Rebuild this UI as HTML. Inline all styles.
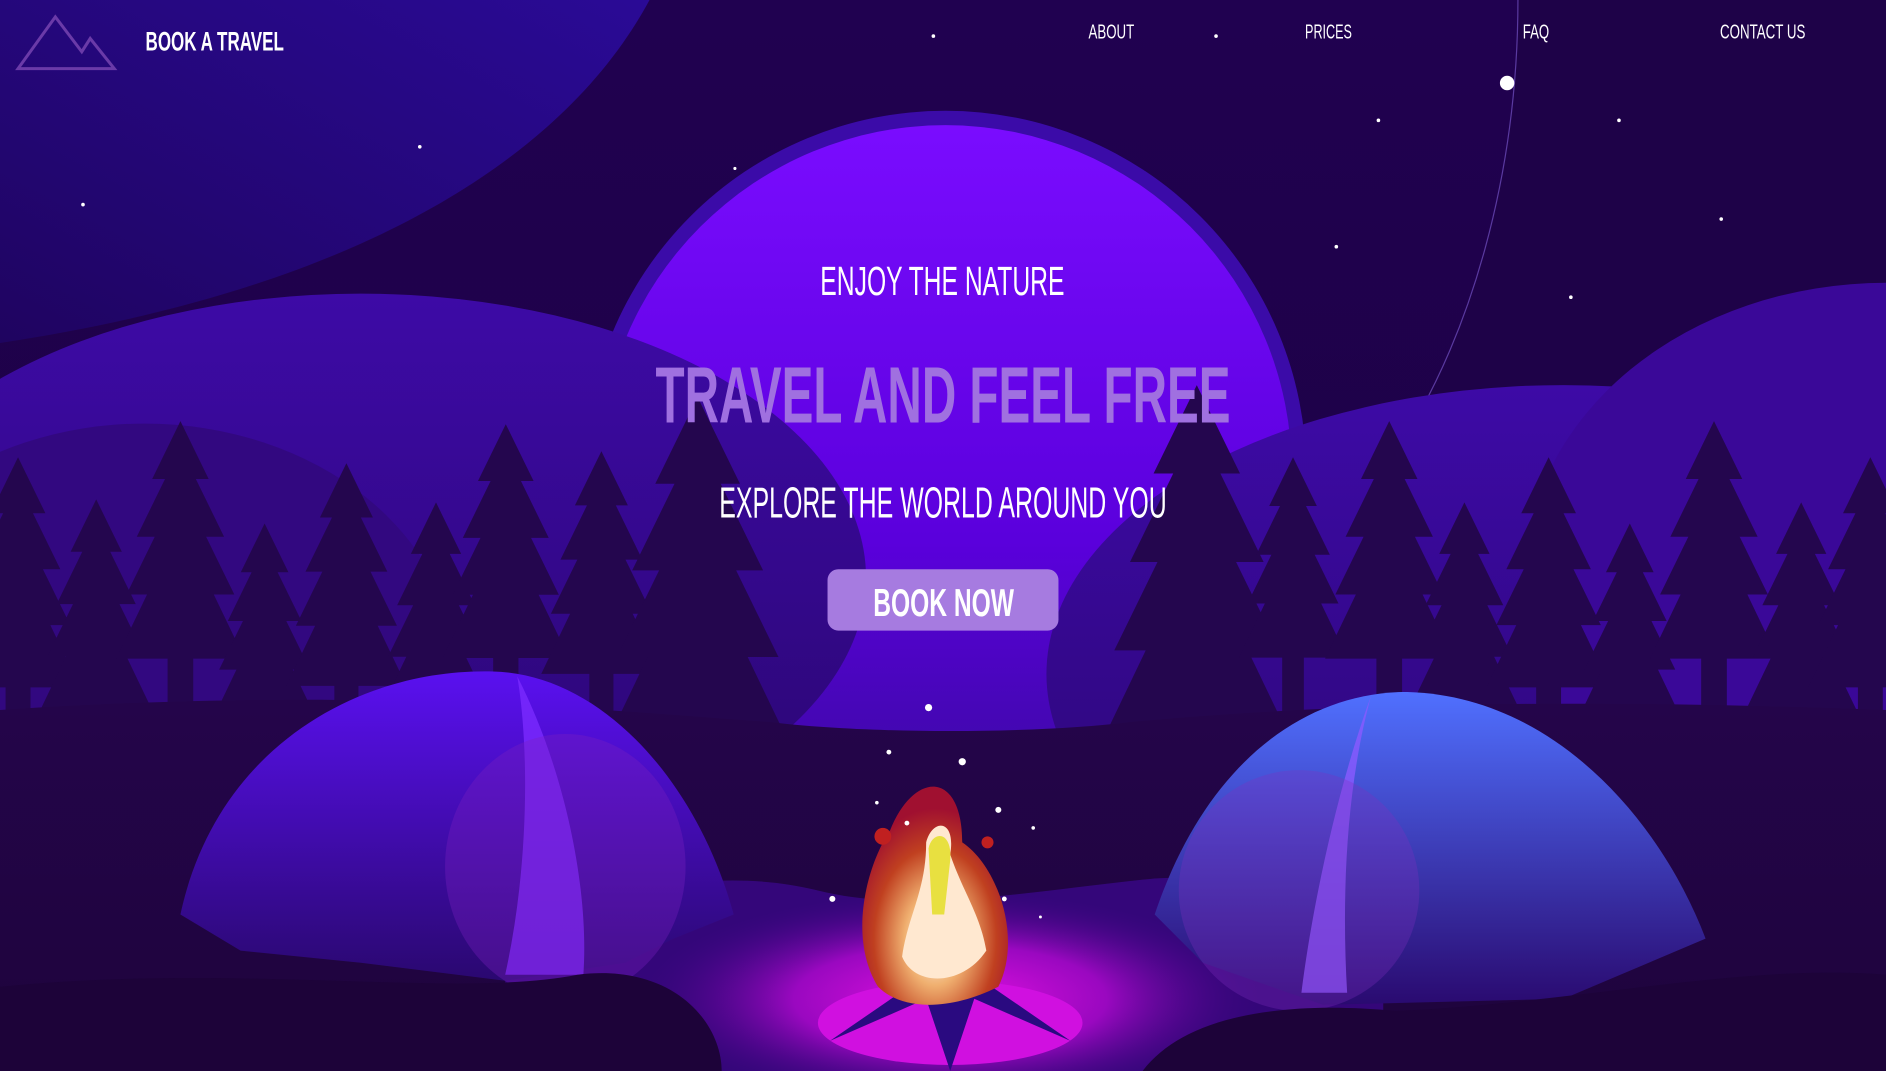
<!DOCTYPE html>
<html><head><meta charset="utf-8"><style>
html,body{margin:0;padding:0;background:#1e0245;overflow:hidden}
svg{display:block}
text{font-family:"Liberation Sans",sans-serif}
</style></head><body>
<svg width="1886" height="1071" viewBox="0 0 1568 890" preserveAspectRatio="none" xmlns="http://www.w3.org/2000/svg">
<defs>
<linearGradient id="bg" x1="0" y1="0" x2="0" y2="1"><stop offset="0" stop-color="#200150"/><stop offset="1" stop-color="#1c0240"/></linearGradient>
<linearGradient id="tl" x1="0" y1="1" x2="1" y2="0"><stop offset="0" stop-color="#1f0460"/><stop offset="1" stop-color="#2a0a96"/></linearGradient>
<linearGradient id="moon" x1="0" y1="0" x2="0" y2="1"><stop offset="0" stop-color="#7a0cff"/><stop offset="0.6" stop-color="#5a00dc"/><stop offset="1" stop-color="#3a0aa0"/></linearGradient>
<linearGradient id="hill" x1="0" y1="0" x2="0" y2="1"><stop offset="0" stop-color="#3d0aa6"/><stop offset="1" stop-color="#2a0670"/></linearGradient>
<linearGradient id="tentL" x1="0" y1="0" x2="0" y2="1"><stop offset="0" stop-color="#5a10f0"/><stop offset="1" stop-color="#2a0870"/></linearGradient>
<linearGradient id="tentR" x1="0" y1="0" x2="0" y2="1"><stop offset="0" stop-color="#5070ff"/><stop offset="1" stop-color="#2a0a70"/></linearGradient>
<linearGradient id="gnd" x1="0" y1="0" x2="0" y2="1"><stop offset="0" stop-color="#24054a"/><stop offset="1" stop-color="#1e043c"/></linearGradient>
<radialGradient id="glow" cx="0.5" cy="0.5" r="0.5"><stop offset="0" stop-color="#e010e0"/><stop offset="0.5" stop-color="#9a08c0"/><stop offset="1" stop-color="#3a0680" stop-opacity="0"/></radialGradient>
<radialGradient id="fire" cx="0.5" cy="0.7" r="0.6"><stop offset="0" stop-color="#fff"/><stop offset="0.35" stop-color="#f0b070"/><stop offset="0.7" stop-color="#c04020"/><stop offset="1" stop-color="#a01030"/></radialGradient>
<symbol id="tree" viewBox="0 0 100 300" overflow="visible">
<polygon points="50,0 72,45 62,45 84,90 70,90 92,135 76,135 100,185 60,185 60,300 40,300 40,185 0,185 24,135 8,135 30,90 16,90 38,45 28,45" fill="#24064e"/>
</symbol>
</defs>
<rect width="1568" height="890" fill="url(#bg)"/>
<path d="M0 0 L540 0 C470 130 300 240 0 285 Z" fill="url(#tl)"/>
<path d="M1262 0 C1262 150 1220 280 1170 360 L1568 360 L1568 0Z" fill="#1e0248"/>
<path d="M1262 0 C1262 150 1220 280 1170 360" stroke="#5a3aa0" stroke-width="1" fill="none"/>
<g fill="#fff">
<circle cx="1253" cy="69" r="6"/><circle cx="776" cy="30" r="1.5"/><circle cx="1011" cy="30" r="1.5"/>
<circle cx="349" cy="122" r="1.5"/><circle cx="69" cy="170" r="1.5"/><circle cx="611" cy="140" r="1.3"/>
<circle cx="1146" cy="100" r="1.5"/><circle cx="1346" cy="100" r="1.5"/><circle cx="1111" cy="205" r="1.5"/>
<circle cx="1431" cy="182" r="1.5"/><circle cx="1306" cy="247" r="1.5"/>
</g>
<circle cx="786" cy="392" r="300" fill="#3b0ba8"/>
<circle cx="786" cy="392" r="288" fill="url(#moon)"/>
<ellipse cx="300" cy="480" rx="420" ry="236" fill="url(#hill)"/>
<ellipse cx="1300" cy="560" rx="430" ry="240" fill="url(#hill)"/>
<ellipse cx="1568" cy="480" rx="300" ry="245" fill="#3a0898"/>
<ellipse cx="120" cy="560" rx="260" ry="208" fill="#320880"/>
<g>
<use href="#tree" x="-40" y="380" width="110" height="310"/>
<use href="#tree" x="30" y="415" width="100" height="290"/>
<use href="#tree" x="95" y="350" width="110" height="320"/>
<use href="#tree" x="175" y="435" width="90" height="270"/>
<use href="#tree" x="238" y="380" width="100" height="310"/>
<use href="#tree" x="315" y="415" width="95" height="290"/>
<use href="#tree" x="368" y="350" width="105" height="320"/>
<use href="#tree" x="450" y="365" width="100" height="320"/>
<use href="#tree" x="490" y="330" width="180" height="480"/>
<use href="#tree" x="900" y="320" width="190" height="490"/>
<use href="#tree" x="1030" y="370" width="90" height="290"/>
<use href="#tree" x="1100" y="350" width="110" height="320"/>
<use href="#tree" x="1170" y="415" width="95" height="290"/>
<use href="#tree" x="1235" y="380" width="105" height="310"/>
<use href="#tree" x="1310" y="435" width="90" height="270"/>
<use href="#tree" x="1370" y="350" width="110" height="320"/>
<use href="#tree" x="1450" y="415" width="95" height="290"/>
<use href="#tree" x="1500" y="380" width="110" height="310"/>
</g>
<path d="M0 590 C300 570 500 590 640 600 C720 610 860 610 940 600 C1100 585 1300 580 1568 590 L1568 890 L0 890Z" fill="url(#gnd)"/>
<path d="M420 760 C520 740 600 720 680 740 C760 760 860 740 960 730 C1050 725 1100 760 1150 780 L1150 890 L420 890Z" fill="#3a0888" opacity="0.8"/>
<ellipse cx="790" cy="830" rx="260" ry="90" fill="url(#glow)"/>
<ellipse cx="790" cy="850" rx="110" ry="35" fill="#d010e0"/>
<path d="M150 760 C180 620 300 555 410 558 C500 560 580 650 610 760 L560 780 L520 800 L420 815 L300 800 L200 790 Z" fill="url(#tentL)"/>
<path d="M430 562 C470 640 490 740 485 810 L420 810 C440 720 440 620 430 562Z" fill="#7a2aff" opacity="0.8"/>
<ellipse cx="470" cy="720" rx="100" ry="110" fill="#7a20c0" opacity="0.35"/>
<path d="M960 760 C1000 640 1080 575 1170 575 C1290 578 1380 680 1418 780 L1300 830 L1100 835 L1000 800Z" fill="url(#tentR)"/>
<path d="M1140 578 C1110 660 1090 760 1082 825 L1120 825 C1115 740 1120 650 1140 578Z" fill="#8a5aff" opacity="0.8"/>
<ellipse cx="1080" cy="740" rx="100" ry="100" fill="#8030c0" opacity="0.3"/>
<path d="M0 820 C200 800 380 830 480 810 C560 800 600 850 600 890 L0 890Z" fill="#1d0339"/>
<path d="M950 890 C980 850 1050 830 1160 840 C1300 835 1450 800 1568 810 L1568 890Z" fill="#1d0339"/>
<path d="M690 865 L770 830 L790 890 L810 830 L890 865 L810 810 L770 810Z" fill="#2a0a80"/>
<path d="M740 690 C760 640 800 640 800 700 C830 720 850 780 830 820 C790 840 750 840 730 820 C705 780 720 720 740 690Z" fill="url(#fire)"/>
<path d="M770 700 C775 680 795 680 790 710 C800 740 815 760 820 790 C800 820 760 820 750 795 C755 760 770 740 770 700Z" fill="#ffe8d0"/>
<path d="M772 705 C775 690 792 690 790 715 L785 760 L775 760Z" fill="#e8e040"/>
<g fill="#c02020"><circle cx="734" cy="695" r="7"/><circle cx="821" cy="700" r="5"/></g>
<g fill="#fff"><circle cx="772" cy="588" r="3"/><circle cx="800" cy="633" r="3"/><circle cx="739" cy="625" r="2"/><circle cx="830" cy="673" r="2.5"/><circle cx="754" cy="684" r="2"/><circle cx="859" cy="688" r="1.5"/><circle cx="692" cy="747" r="2.5"/><circle cx="835" cy="747" r="2"/><circle cx="865" cy="762" r="1.2"/><circle cx="729" cy="667" r="1.5"/></g>
<path d="M15 57 L46 14 L68 43 L75 32 L95 57 Z" fill="none" stroke="#6a3aa8" stroke-width="2.5"/>
<text x="121" y="42" fill="#fff" font-size="22" font-weight="bold" textLength="115" lengthAdjust="spacingAndGlyphs">BOOK A TRAVEL</text>
<g fill="#fff" font-size="17">
<text x="905" y="32" textLength="38" lengthAdjust="spacingAndGlyphs">ABOUT</text>
<text x="1085" y="32" textLength="39" lengthAdjust="spacingAndGlyphs">PRICES</text>
<text x="1266" y="32" textLength="22" lengthAdjust="spacingAndGlyphs">FAQ</text>
<text x="1430" y="32" textLength="71" lengthAdjust="spacingAndGlyphs">CONTACT US</text>
</g>
<text x="682" y="245" fill="#fff" font-size="34" textLength="203" lengthAdjust="spacingAndGlyphs">ENJOY THE NATURE</text>
<text x="545" y="351" fill="#a070e0" font-size="66" font-weight="bold" textLength="478" lengthAdjust="spacingAndGlyphs">TRAVEL AND FEEL FREE</text>
<text x="598" y="430" fill="#fff" font-size="36" textLength="372" lengthAdjust="spacingAndGlyphs">EXPLORE THE WORLD AROUND YOU</text>
<rect x="688" y="473" width="192" height="51" rx="9" fill="#a67be0"/>
<text x="726" y="512" fill="#fff" font-size="32" font-weight="bold" textLength="117" lengthAdjust="spacingAndGlyphs">BOOK NOW</text>
</svg>
</body></html>
